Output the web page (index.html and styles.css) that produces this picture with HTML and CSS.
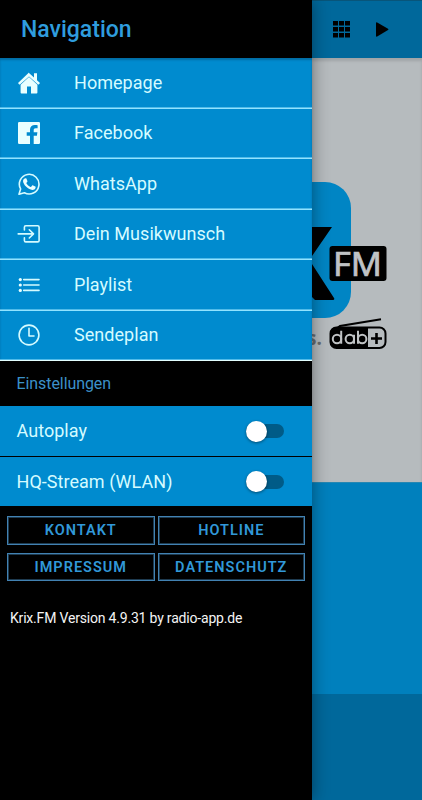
FILE: index.html
```html
<!DOCTYPE html>
<html lang="de">
<head>
<meta charset="utf-8">
<title>Krix.FM</title>
<link rel="stylesheet" href="styles.css">
</head>
<body>
<div class="app">
  <aside class="drawer">
    <header class="drawer-header"><h1>Navigation</h1></header>
    <nav class="menu">
      <a class="item"><svg class="icon" viewBox="0 0 24 24"><path d="M12 3.3 22.4 12.6 21.3 13.8 12 5.4 2.7 13.8 1.6 12.6 12 1.9l5 4.5V2.2h3v7L23 12l-1 1.2L12 4 2 13.2 1 12 12 1.6Z"/><path d="M12 6.1 20.4 13.7V21.6q0 .9-.9.9H14v-7h-4v7H4.500q-.9 0-.9-.9V13.700Z"/></svg><span>Homepage</span></a>
      <a class="item"><svg class="icon" viewBox="0 0 24 24"><path d="M2.200 1h19.600q1.200 0 1.200 1.200v19.600q0 1.200-1.200 1.200h-5.100v-8.200h3.200l.5-3.500h-3.700V9.200c0-1.200.5-1.900 2-1.900h1.900V4.200c-.7-.1-1.600-.2-2.700-.2-3 0-4.900 1.700-4.900 4.800v2.500H9.700v3.500H13V23H2.200Q1 23 1 21.800V2.200Q1 1 2.200 1Z"/></svg><span>Facebook</span></a>
      <a class="item"><svg class="icon" viewBox="0 0 24 24"><path class="line" d="M2 22.300 3.600 16.900A9.800 9.800 0 1 1 7.400 20.700Z"/><path d="M8.500 6.300c.5 0 .8 0 1 .5l.9 2.100c.2.500-.1.900-.9 1.800-.2.200-.2.500 0 .8.900 1.600 2.200 2.700 4 3.400.3.100.5.100.7-.1l1-1.300c.3-.3.500-.3.900-.1l2.200 1.100c.5.300.4.700.2 1.500-.3 1.300-1.800 2.100-3.200 2-3.900-.6-7.600-3.700-9-7.400-.7-2 .1-4.300 2.200-4.300Z"/></svg><span>WhatsApp</span></a>
      <a class="item"><svg class="icon" viewBox="0 0 24 24"><path class="line" d="M7.400 8V5.200q0-1.400 1.400-1.400H20.700q1.400 0 1.400 1.400V18.500q0 1.400-1.400 1.400H8.800q-1.400 0-1.400-1.400V15.700M1.200 11.900H16M12.300 7.800 16.500 11.900 12.300 16"/></svg><span>Dein Musikwunsch</span></a>
      <a class="item"><svg class="icon" viewBox="0 0 24 24"><path class="line" d="M6.700 6.600H22M6.700 12H22M6.700 17.400H22"/><circle cx="3.300" cy="6.600" r="1.600"/><circle cx="3.300" cy="12" r="1.600"/><circle cx="3.300" cy="17.400" r="1.600"/></svg><span>Playlist</span></a>
      <a class="item"><svg class="icon" viewBox="0 0 24 24"><circle class="line" cx="12" cy="12" r="9.900"/><path class="line" d="M12 5.300V13h5"/></svg><span>Sendeplan</span></a>
    </nav>
    <h2 class="section">Einstellungen</h2>
    <div class="settings">
      <label class="setting"><span>Autoplay</span><span class="toggle"></span></label>
      <label class="setting"><span>HQ-Stream (WLAN)</span><span class="toggle"></span></label>
    </div>
    <div class="buttons">
      <button>KONTAKT</button><button>HOTLINE</button>
      <button>IMPRESSUM</button><button>DATENSCHUTZ</button>
    </div>
    <p class="version">Krix.FM Version 4.9.31 by radio-app.de</p>
  </aside>
  <main class="page">
    <div class="toolbar">
      <svg class="grid-icon" viewBox="0 0 17 17"><path d="M0 0h5v4.600H0zM6 0h5v4.600H6zM12 0h5v4.600h-5zM0 6h5v4.600H0zM6 6h5v4.600H6zM12 6h5v4.600h-5zM0 12h5v4.600H0zM6 12h5v4.600H6zM12 12h5v4.600h-5z"/></svg>
      <svg class="play-icon" viewBox="0 0 13 15"><path d="M0 1.200Q0 0 1.200.5L12 6.700q1 .7 0 1.400L1.200 14.500Q0 15 0 13.800Z"/></svg>
    </div>
    <div class="hero">
      <svg class="logo" viewBox="0 0 110 424">
        <rect class="tile" x="-98" y="124" width="137" height="136" rx="26"/>
        <path d="M0 169h20L0 198ZM0 206 22 240q1 2-1 2H3L0 239Z"/>
        <rect x="17.500" y="188" width="57" height="35" rx="3"/>
        <text class="fm" x="21" y="218.300" textLength="49" lengthAdjust="spacingAndGlyphs">FM</text>
        <text class="slogan" x="-5" y="286.500">s.</text>
        <path class="stroke" d="M20 274 28 268 69 261.300"/>
        <rect class="stroke" x="18.500" y="269.500" width="55" height="20.500" rx="6"/>
        <path d="M24 269.500H56v20.500H24q-5-1-6-6v-9q1-5 6-6Z"/>
        <g class="dab"><circle cx="25" cy="281" r="4.200"/><path d="M29.200 272.700V285.700M42 276.700V285.700M46 272.700V285.700"/><circle cx="37.800" cy="281" r="4.200"/><circle cx="50.200" cy="281" r="4.200"/></g>
        <path class="plus" d="M59 280.500H70M64.500 275V286"/>
      </svg>
    </div>
    <div class="panel"></div>
    <div class="footer"></div>
  </main>
</div>
</body>
</html>
```

FILE: styles.css
```css
* { box-sizing: border-box; }
body { margin: 0; font-family: Roboto, sans-serif; background: #000; }
.app { display: flex; width: 422px; height: 800px; overflow: hidden; }
.drawer { width: 312px; background: #000; color: #d5fbff; box-shadow: 0 0 16px rgba(0, 0, 0, .42); z-index: 1; }
.drawer-header { height: 58px; display: flex; align-items: center; padding: 2px 0 0 21px; }
h1 { margin: 0; font-size: 23px; font-weight: 500; line-height: 28px; color: #2f9dde; }
.menu { height: 303px; display: grid; grid-template-rows: repeat(6, 1fr); background: #008bcf; box-shadow: inset 0 2px 2px rgba(0, 50, 80, .35); }
.item { display: flex; align-items: center; padding-left: 17px; border-bottom: 1px solid #91e3ff; box-shadow: inset 0 -1px rgba(145, 227, 255, .55); font-size: 18px; letter-spacing: .04px; }
.item span { margin-bottom: 1px; }
.item:last-child { border-color: #e4ffff; }
.icon { width: 24px; height: 24px; margin-right: 33px; fill: #e9ffff; }
.line { fill: none; stroke: #d5fbff; stroke-width: 1.6; stroke-linejoin: round; stroke-linecap: round; }
.section { height: 45px; margin: 0; padding-left: 16.500px; font-size: 16px; font-weight: 400; line-height: 45px; color: #3c91c9; letter-spacing: -.08px; }
.settings { display: grid; gap: 1px; }
.setting { height: 50px; background: #008bcf; display: flex; justify-content: space-between; align-items: center; padding: 0 28.500px 0 16.500px; font-size: 18px; letter-spacing: .04px; }
.setting:first-child > span:first-child { margin-bottom: 1px; }
.setting:last-child { height: 49px; }
.toggle { width: 37.500px; height: 14px; border-radius: 7px; background: #005b87; display: flex; align-items: center; }
.toggle::before { content: ""; width: 21px; height: 21px; border-radius: 50%; background: #fff; box-shadow: 0 1px 3px rgba(0, 0, 0, .45); }
.buttons { display: grid; grid-template-columns: 1fr 1fr; gap: 8px 3px; padding: 10px 7px 0; }
button { height: 28.500px; padding: 1px 0 0; border: 1px solid #4282b2; box-shadow: inset 0 0 0 1px rgba(66, 130, 178, .45); background: #000; color: #3198d8; font: 600 14.500px/25px Roboto, sans-serif; letter-spacing: 1px; }
.version { margin: 28px 0 0 10px; font-size: 14px; line-height: 18px; color: #f4f4f4; letter-spacing: -.19px; }
.page { width: 110px; display: flex; flex-direction: column; background: #0080bd; }
.toolbar { height: 58px; background: #00689b; border-top: 1px solid #08557a; display: flex; align-items: center; gap: 26px; padding-left: 21px; }
.grid-icon { width: 17px; height: 17px; }
.play-icon { width: 13px; height: 15px; }
.hero { height: 424px; background: #b6bbbe; box-shadow: inset 0 3px 3px rgba(0, 0, 0, .12); }
.logo { display: block; width: 110px; height: 424px; }
.tile { fill: #0085c4; }
.fm { font: 32px "Noto Sans", sans-serif; fill: #c0c3c5; stroke: #c0c3c5; stroke-width: .7; }
.slogan { font: 700 19px "Open Sans", sans-serif; fill: #686c6f; }
.stroke { fill: none; stroke: #000; stroke-width: 2; }
.dab { fill: none; stroke: #c0c3c5; stroke-width: 2; }
.plus { fill: none; stroke: #000; stroke-width: 2.600; }
.panel { height: 212px; border-top: 1px solid #2587b3; }
.footer { flex: 1; background: #00689b; }
```
